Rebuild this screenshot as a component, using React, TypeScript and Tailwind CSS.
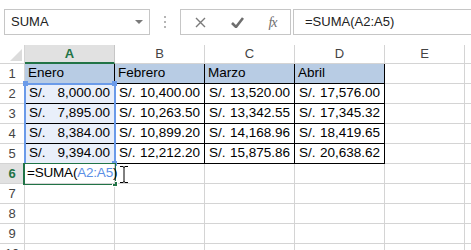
import React from "react";

const COLS = ["A", "B", "C", "D", "E", "F"];
const COL_W = ["w-[90px]", "w-[90px]", "w-[90px]", "w-[90px]", "w-[80px]", "w-[100px]"];

const MONTHS = ["Enero", "Febrero", "Marzo", "Abril"];
const DATA: string[][] = [
  ["8,000.00", "10,400.00", "13,520.00", "17,576.00"],
  ["7,895.00", "10,263.50", "13,342.55", "17,345.32"],
  ["8,384.00", "10,899.20", "14,168.96", "18,419.65"],
  ["9,394.00", "12,212.20", "15,875.86", "20,638.62"],
];

const cellFont = "font-['Liberation_Sans',Arial,sans-serif] text-[13.5px] text-black";

function Cell({ col, row }: { col: number; row: number }) {
  const inTable = col < 4 && row <= 5;
  const border = inTable ? "border-black" : "border-[#d4d4d4]";
  let bg = "bg-white";
  if (inTable && row === 1) bg = "bg-[#b8cce4]";
  else if (col === 0 && row >= 2 && row <= 5) bg = "bg-[#e9effa]";

  const isFormula = col === 0 && row === 6;

  let content: React.ReactNode = null;
  if (inTable && row === 1) {
    content = <span className="pl-[3px]">{MONTHS[col]}</span>;
  } else if (inTable) {
    content = (
      <div className="flex w-full justify-between px-[4px]">
        <span>S/.</span>
        <span>{DATA[row - 2][col]}</span>
      </div>
    );
  } else if (isFormula) {
    content = (
      <span className="pl-[2px] tracking-[-0.2px]">
        =SUMA(<span className="text-[#5b8fe6]">A2:A5</span>)
      </span>
    );
  }

  return (
    <div
      className={`${COL_W[col]} h-[20px] shrink-0 border-r border-b ${border} ${bg} ${cellFont} flex items-center whitespace-nowrap ${
        isFormula ? "relative z-10 overflow-visible" : "overflow-hidden"
      }`}
    >
      {content}
    </div>
  );
}

export default function App() {
  const rows = [1, 2, 3, 4, 5, 6, 7, 8, 9, 10];

  return (
    <div className="w-[471px] h-[250px] overflow-hidden bg-white select-none">
      {/* formula bar */}
      <div className="h-[45px] flex items-start pt-[9px]">
        <div className="ml-[4px] w-[146px] h-[26px] shrink-0 border border-[#c6c6c6] flex items-center justify-between pl-[6px] pr-[6px]">
          <span className="font-['Liberation_Sans',Arial,sans-serif] text-[13px] text-[#222]">SUMA</span>
          <svg width="8" height="5" viewBox="0 0 8 5">
            <path d="M0 0 L8 0 L4 4 Z" fill="#7a7a7a" />
          </svg>
        </div>
        <div className="w-[30px] h-[26px] shrink-0 flex flex-col items-center justify-center gap-[3px]">
          <span className="w-[2px] h-[2px] bg-[#b5b5b5]" />
          <span className="w-[2px] h-[2px] bg-[#b5b5b5]" />
          <span className="w-[2px] h-[2px] bg-[#b5b5b5]" />
        </div>
        <div className="w-[111px] h-[26px] shrink-0 border border-[#c6c6c6] flex items-center">
          <div className="w-[36px] flex justify-center pl-[2px]">
            <svg width="11" height="11" viewBox="0 0 11 11">
              <path d="M1 1 L10 10 M10 1 L1 10" stroke="#7a7a7a" strokeWidth="1.4" />
            </svg>
          </div>
          <div className="w-[38px] flex justify-center pl-[2px]">
            <svg width="13" height="11" viewBox="0 0 13 11">
              <path d="M1 6 L5 10 L12 1" stroke="#6e6e6e" strokeWidth="2.6" fill="none" />
            </svg>
          </div>
          <div className="flex-1 flex justify-center">
            <span className="font-['Liberation_Serif',serif] italic text-[14px] text-[#6e6e6e] tracking-[-1px]">fx</span>
          </div>
        </div>
        <div className="ml-[2px] flex-1 h-[26px] border border-[#c6c6c6] border-r-0 flex items-center pl-[11px]">
          <span className="font-['Liberation_Sans',Arial,sans-serif] text-[13px] text-[#222]">=SUMA(A2:A5)</span>
        </div>
      </div>

      {/* sheet */}
      <div className="relative">
        {/* column headers */}
        <div className="flex h-[19px]">
          <div className="w-[25px] h-[19px] shrink-0 border-r border-b border-[#d4d4d4] flex items-end justify-end pr-[2px] pb-[2px]">
            <svg width="12" height="12" viewBox="0 0 12 12">
              <path d="M12 0 L12 12 L0 12 Z" fill="#dcdcdc" />
            </svg>
          </div>
          {COLS.map((c, i) => (
            <div
              key={c}
              className={`${COL_W[i]} h-[19px] shrink-0 border-r flex items-center justify-center font-['Liberation_Sans',Arial,sans-serif] text-[13px] ${
                i === 0
                  ? "bg-[#e1e1e1] border-[#c6c6c6] border-b-2 border-b-[#217346] text-[#217346] font-bold"
                  : "bg-white border-[#d4d4d4] border-b text-[#444]"
              }`}
            >
              {c}
            </div>
          ))}
        </div>

        {rows.map((r) => (
          <div key={r} className="flex h-[20px]">
            <div
              className={`w-[25px] h-[20px] shrink-0 border-r border-b border-[#d4d4d4] flex items-center justify-center font-['Liberation_Sans',Arial,sans-serif] text-[13px] ${
                r === 6 ? "bg-[#e1e1e1] text-[#217346] font-bold" : "bg-white text-[#444]"
              }`}
            >
              {r}
            </div>
            {COLS.map((c, i) => (
              <Cell key={c} col={i} row={r} />
            ))}
          </div>
        ))}

        {/* range reference A2:A5 */}
        <div className="absolute left-[24px] top-[38px] w-[92px] h-[82px] border-2 border-[#6b9be9] pointer-events-none" />
        <div className="absolute left-[23px] top-[36px] w-[5px] h-[5px] bg-[#6b9be9]" />
        <div className="absolute left-[112px] top-[36px] w-[5px] h-[5px] bg-[#6b9be9]" />
        <div className="absolute left-[112px] top-[116px] w-[5px] h-[5px] bg-[#6b9be9]" />

        {/* active cell A6 */}
        <div className="absolute left-[23px] top-[118px] w-[93px] h-[22px] border-2 border-[#217346] pointer-events-none" />
        <div className="absolute left-[112px] top-[136px] w-[6px] h-[6px] bg-[#217346] border border-white" />

        {/* text cursor */}
        <svg className="absolute left-[119px] top-[121px] z-20" width="10" height="17" viewBox="0 0 10 17">
          <path d="M1 0.5 H4 M6 0.5 H9 M5 1 V16 M1 16.5 H4 M6 16.5 H9 M4 1 H6 M4 16 H6" stroke="#000" strokeWidth="1" fill="none" />
        </svg>
      </div>
    </div>
  );
}
